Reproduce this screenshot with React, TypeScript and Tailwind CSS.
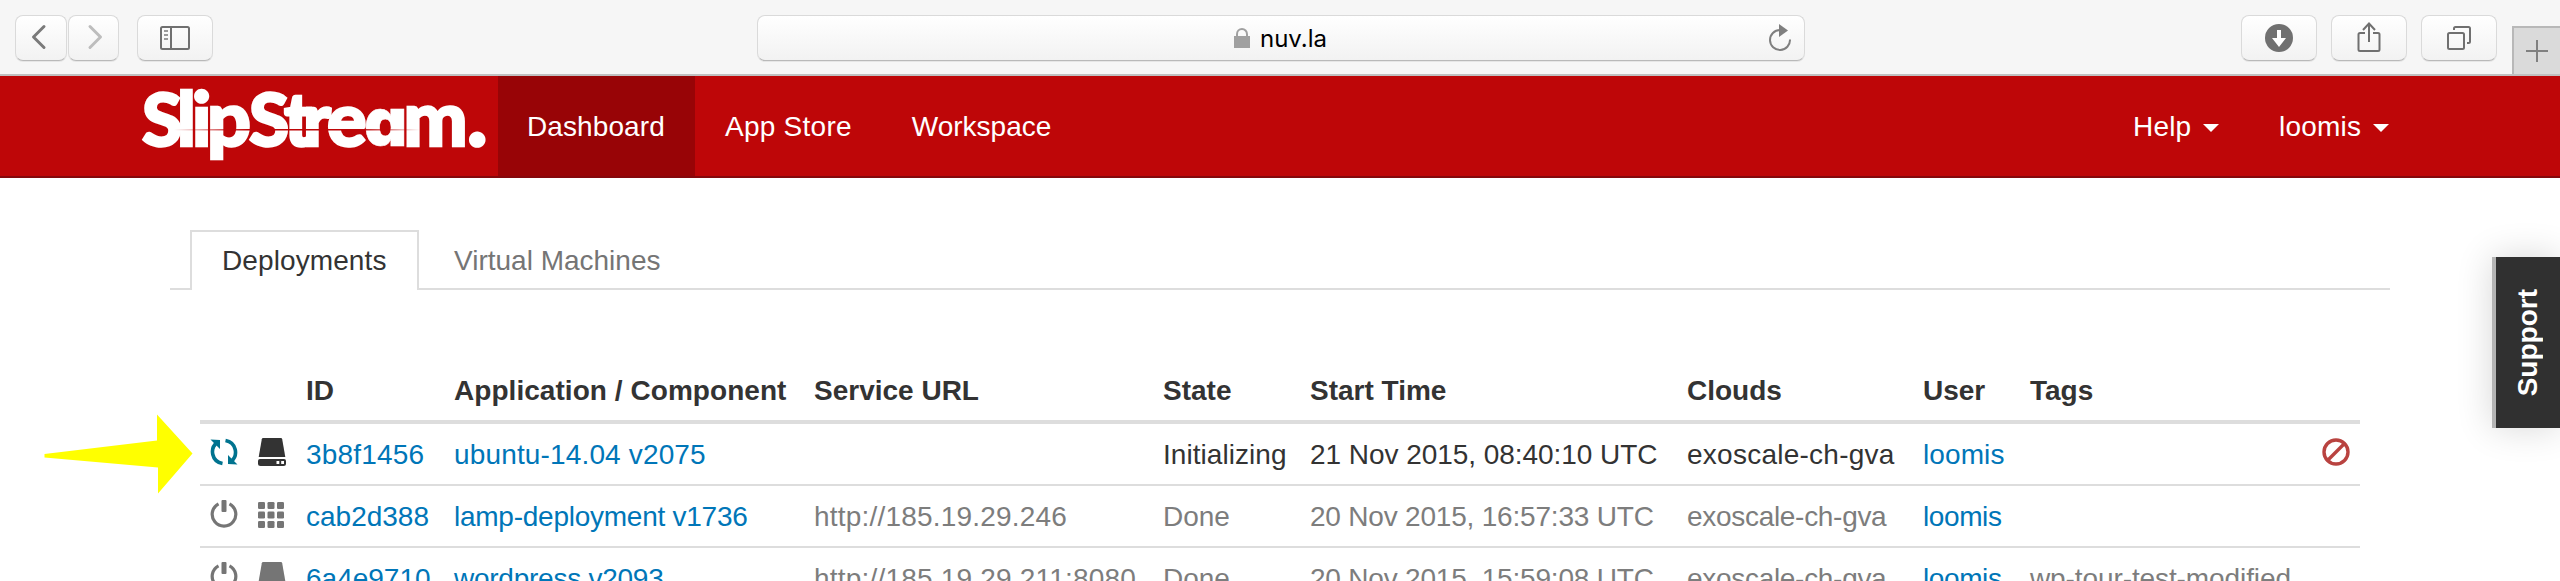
import type { ReactNode } from 'react';

const toolButton =
  'flex h-[46px] items-center justify-center rounded-[8px] border border-[#dadada] border-b-[#b9b9b9] bg-gradient-to-b from-white to-[#f2f2f2] shadow-[0_1px_0_#e6e6e6]';

function BrowserBar() {
  return (
    <div className="flex h-[76px] items-start border-b-2 border-[#c0c0c0] bg-[#f6f6f6] pl-[15px]">
      <div className="mt-[15px] flex gap-px">
        <div className={`${toolButton} w-[52px]`}>
          <svg width="52" height="46" viewBox="0 0 52 46" fill="none" stroke="#7a7a7a" strokeWidth="3" strokeLinecap="round" strokeLinejoin="round" className="-ml-px shrink-0">
            <path d="M29 11.5 18.5 22 29 32.500" />
          </svg>
        </div>
        <div className={`${toolButton} w-[51px]`}>
          <svg width="51" height="46" viewBox="0 0 51 46" fill="none" stroke="#bdbdbd" strokeWidth="3" strokeLinecap="round" strokeLinejoin="round" className="shrink-0">
            <path d="M22 11.500 32.500 22 22 32.500" />
          </svg>
        </div>
      </div>
      <div className={`${toolButton} mt-[15px] ml-[18px] w-[76px]`}>
        <svg width="30" height="24" viewBox="0 0 30 24" fill="none" stroke="#707070" strokeWidth="2">
          <rect x="1" y="1" width="28" height="22" rx="1.500" />
          <path d="M11 1v22" />
          <path d="M4 5h4M4 9h4M4 13h4" stroke="#9a9a9a" />
        </svg>
      </div>
      <div className={`${toolButton} mt-[15px] ml-[544px] w-[1048px] justify-start`}>
        <div className="flex w-full items-center pl-[476px]">
          <svg width="16" height="20" viewBox="0 0 16 20" className="shrink-0">
            <rect y="8" width="16" height="12" fill="#a0a0a0" />
            <path d="M3 9V6.200a5 5.200 0 0 1 10 0V9" fill="none" stroke="#a0a0a0" strokeWidth="2" />
          </svg>
          <span className="mt-[2px] ml-[10px] font-['Inter'] text-[24px] leading-[30px] text-black">nuv.la</span>
          <svg width="26" height="28" viewBox="0 0 26 28" className="mr-[11px] ml-auto" fill="none" stroke="#7f7f7f" strokeWidth="2">
            <path d="M23 15.500A10 10 0 1 1 13 6" />
            <path d="M12 0v13l9-6.500z" fill="#7f7f7f" stroke="none" />
          </svg>
        </div>
      </div>
      <div className="mt-[15px] ml-auto flex gap-[14px]">
        <div className={`${toolButton} w-[76px]`}>
          <svg width="28" height="28" viewBox="0 0 28 28">
            <circle cx="14" cy="14" r="14" fill="#707070" />
            <path d="M12 6h4v8h5l-7 9-7-9h5z" fill="#fff" />
          </svg>
        </div>
        <div className={`${toolButton} w-[76px]`}>
          <svg width="24" height="32" viewBox="0 0 24 32" fill="none" stroke="#707070" strokeWidth="2" className="-mt-[2px]">
            <path d="M8 12H3a1.500 1.500 0 0 0-1.500 1.500v15A1.500 1.500 0 0 0 3 30h18a1.500 1.500 0 0 0 1.500-1.500v-15A1.500 1.500 0 0 0 21 12h-5M12 21V3M6 9l6-6.500L18 9" />
          </svg>
        </div>
        <div className={`${toolButton} w-[76px]`}>
          <svg width="26" height="26" viewBox="0 0 26 26" fill="none" stroke="#707070" strokeWidth="2">
            <rect x="2" y="8" width="16" height="16" rx="1.500" />
            <path d="M8 5V3.500A1.500 1.500 0 0 1 9.500 2h13A1.500 1.500 0 0 1 24 3.500v13a1.500 1.500 0 0 1-1.500 1.500H21" />
          </svg>
        </div>
      </div>
      <div className="mt-[26px] ml-[15px] flex h-[48px] w-[48px] items-center justify-center border-t-2 border-l-2 border-[#b8b8b8] bg-[#dadada]">
        <svg width="22" height="22" viewBox="0 0 22 22" stroke="#808080" strokeWidth="2">
          <path d="M11 0v22M0 11h22" />
        </svg>
      </div>
    </div>
  );
}

function Logo() {
  return (
    <svg width="356" height="100" viewBox="142 76 356 100" className="shrink-0 overflow-visible" aria-label="SlipStream">
      <defs>
        <linearGradient id="hairline" x1="174" x2="420" y1="0" y2="0" gradientUnits="userSpaceOnUse">
          <stop offset="0" stopColor="#be0608" stopOpacity="0" />
          <stop offset=".3" stopColor="#be0608" />
          <stop offset=".75" stopColor="#be0608" />
          <stop offset="1" stopColor="#be0608" stopOpacity="0" />
        </linearGradient>
      </defs>
      <text y="145.500" fill="#fff" stroke="#fff" strokeWidth="2.500" fontFamily="Lato" fontWeight="900" fontSize="74">
        <tspan x="142" fontSize="73">S</tspan>
        <tspan x="177 192">li</tspan>
        <tspan x="207" fontSize="77">p</tspan>
        <tspan x="249" fontSize="73">S</tspan>
        <tspan x="284 303 327">tre</tspan>
        <tspan x="364" fontFamily="Inter" fontSize="67" strokeWidth="0.500" className="[font-feature-settings:'cv11']">a</tspan>
        <tspan x="403.500" fontSize="76">m</tspan>
        <tspan x="467" fontSize="86">.</tspan>
      </text>
      <rect x="174" y="129" width="246" height="1.500" fill="url(#hairline)" />
    </svg>
  );
}

function Caret() {
  return (
    <svg width="16" height="8" viewBox="0 0 16 8" className="mt-[2px]">
      <path d="M0 0h16L8 8z" fill="#fff" />
    </svg>
  );
}

function NavBar() {
  return (
    <nav className="flex h-[102px] items-stretch border-b-2 border-[#85080c] bg-[#be0608] pl-[142px] text-[28px] text-white">
      <Logo />
      <div className="flex w-[197px] items-center bg-[#980406] pt-px pl-[29px] tracking-[0.100px]">Dashboard</div>
      <div className="flex items-center pt-px pl-[30px] tracking-[0.250px]">App Store</div>
      <div className="ml-[60px] flex items-center pt-px">Workspace</div>
      <div className="ml-auto flex w-[146px] items-center gap-[12px] pt-px tracking-[0.200px]">Help<Caret /></div>
      <div className="flex w-[281px] items-center gap-[12px] pt-px tracking-[0.200px]">loomis<Caret /></div>
    </nav>
  );
}

function SyncIcon() {
  return (
    <svg width="28" height="28" viewBox="0 0 28 28" fill="none" stroke="#00738f" strokeWidth="3.600">
      <path d="M12.500 25.500C1.500 23.500-.5 10.500 7 4.500" />
      <path d="M15.500 2.500c11 2 13 15 5.500 21" />
      <path d="M.5 1.500 10 2v9zM27.500 26.500 18 26v-9z" fill="#00738f" stroke="none" />
    </svg>
  );
}

function PowerIcon() {
  return (
    <svg width="28" height="28" viewBox="0 0 28 28" fill="none" stroke="#757575">
      <path d="M8.500 3.800a11.800 11.800 0 1 0 11 0" strokeWidth="3.200" />
      <rect x="11.500" y="0" width="5" height="12" rx="1" fill="#757575" stroke="none" />
    </svg>
  );
}

function DriveIcon({ color }: { color: string }) {
  return (
    <svg width="28" height="28" viewBox="0 0 28 28" fill={color}>
      <path d="M5.500 0h17c1 0 1.500.5 1.700 1.200L27.300 19H.7L3.800 1.200C4 .5 4.500 0 5.500 0z" />
      <path d="M2 21h24a2 2 0 0 1 2 2v2.500a2.500 2.500 0 0 1-2.500 2.500h-23A2.500 2.500 0 0 1 0 25.500V23a2 2 0 0 1 2-2z" />
      <path d="M18.500 23h2.800v3h-2.800zM23.200 23H26v3h-2.800z" fill="#fff" />
    </svg>
  );
}

function GridIcon() {
  const steps = [0, 9.500, 19];
  return (
    <svg width="28" height="28" viewBox="0 0 28 28" fill="#757575">
      {steps.map((y) => steps.map((x) => <rect key={`${x}-${y}`} x={x} y={y + 2} width="7" height="7" rx="1.300" />))}
    </svg>
  );
}

function BanIcon() {
  return (
    <svg width="28" height="28" viewBox="0 0 28 28" fill="none" stroke="#b94340" strokeWidth="3.400">
      <circle cx="14" cy="14" r="12" />
      <path d="M5.500 22.500 22.500 5.500" />
    </svg>
  );
}

const columns = 'grid grid-cols-[58px_48px_148px_360px_349px_147px_377px_236px_107px_292px_38px]';
const row = `${columns} h-[62px] items-center border-b-2 border-[#dddddd] pt-[1px]`;
const link = 'text-[#0076b8]';

function Icon({ children, indent = false }: { children: ReactNode; indent?: boolean }) {
  return <div className={indent ? 'pb-[5px] pl-[10px]' : 'pb-[5px]'}>{children}</div>;
}

function DeploymentTable() {
  return (
    <div className="w-[2160px] text-[28px] leading-[40px] whitespace-nowrap">
      <div className={`${columns} h-[62px] items-center border-b-4 border-[#dddddd] pb-[1px] font-bold text-[#333333]`}>
        <span />
        <span />
        <span>ID</span>
        <span className="tracking-[0.050px]">Application / Component</span>
        <span>Service URL</span>
        <span>State</span>
        <span>Start Time</span>
        <span>Clouds</span>
        <span>User</span>
        <span>Tags</span>
      </div>
      <div className={`${row} text-[#333333]`}>
        <Icon indent><SyncIcon /></Icon>
        <Icon><DriveIcon color="#333333" /></Icon>
        <span className={`${link} tracking-[0.200px]`}>3b8f1456</span>
        <span className={`${link} tracking-[0.150px]`}>ubuntu-14.04 v2075</span>
        <span />
        <span className="tracking-[0.050px]">Initializing</span>
        <span className="-tracking-[0.050px]">21 Nov 2015, 08:40:10 UTC</span>
        <span className="tracking-[0.250px]">exoscale-ch-gva</span>
        <span className={`${link} tracking-[0.100px]`}>loomis</span>
        <span />
        <Icon><BanIcon /></Icon>
      </div>
      <div className={`${row} text-[#7d7d7d]`}>
        <Icon indent><PowerIcon /></Icon>
        <Icon><GridIcon /></Icon>
        <span className={link}>cab2d388</span>
        <span className={`${link} tracking-[-0.250px]`}>lamp-deployment v1736</span>
        <span className="tracking-[0.200px]">http://185.19.29.246</span>
        <span>Done</span>
        <span className="tracking-[-0.200px]">20 Nov 2015, 16:57:33 UTC</span>
        <span className="tracking-[-0.300px]">exoscale-ch-gva</span>
        <span className={`${link} tracking-[-0.400px]`}>loomis</span>
      </div>
      <div className={`${row} text-[#7d7d7d]`}>
        <Icon indent><PowerIcon /></Icon>
        <Icon><DriveIcon color="#757575" /></Icon>
        <span className={link}>6a4e9710</span>
        <span className={`${link} tracking-[-0.250px]`}>wordpress v2093</span>
        <span className="tracking-[0.200px]">http://185.19.29.211:8080</span>
        <span>Done</span>
        <span className="tracking-[-0.200px]">20 Nov 2015, 15:59:08 UTC</span>
        <span className="tracking-[-0.300px]">exoscale-ch-gva</span>
        <span className={`${link} tracking-[-0.400px]`}>loomis</span>
        <span className="tracking-[-0.100px]">wp-tour-test-modified</span>
      </div>
    </div>
  );
}

export default function App() {
  return (
    <div className="relative h-[581px] w-[2560px] overflow-hidden bg-white font-['Liberation_Sans',sans-serif]">
      <BrowserBar />
      <NavBar />
      <main>
        <div className="mt-[52px] ml-[170px] flex h-[60px] w-[2220px] text-[28px] leading-[40px]">
          <div className="w-[20px] border-b-2 border-[#dddddd]" />
          <div className="w-[229px] border-2 border-b-0 border-[#dddddd] pt-[9px] pl-[30px] tracking-[0.100px] text-[#333333]">Deployments</div>
          <div className="flex-1 border-b-2 border-[#dddddd] pt-[11px] pl-[35px] text-[#757575]">Virtual Machines</div>
        </div>
        <div className="mt-[72px] ml-[200px]">
          <DeploymentTable />
        </div>
      </main>
      <svg className="absolute top-[414px] left-[44px]" width="150" height="82" viewBox="44 414 150 82">
        <path d="M44.500 454 157 440.500V414.500l35.500 39L158 493.500v-26L44.500 457.500z" fill="#ffff00" />
      </svg>
      <div className="absolute top-[257px] right-0 flex h-[171px] w-[68px] items-center justify-center border-l-4 border-[#b4b4b4] bg-[#303030] shadow-[0_0_36px_rgba(0,0,0,0.16)]">
        <span className="mr-px rotate-180 text-[28px] leading-[32px] font-bold text-white [writing-mode:vertical-rl]">Support</span>
      </div>
    </div>
  );
}
